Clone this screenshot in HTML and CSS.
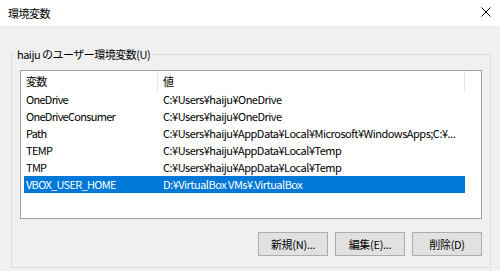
FILE: index.html
```html
<!DOCTYPE html>
<html lang="ja">
<head>
    <meta charset="UTF-8">
    <meta name="viewport" content="width=device-width, initial-scale=1.0">
    <title>環境変数</title>
    <link rel="stylesheet" href="styles.css">
</head>
<body>
    <div class="titlebar">
        <span class="title">環境変数</span>
        <span class="close">
            <svg width="10" height="10" viewBox="0 0 10 10">
                <path d="M0.5 0.5 L9.5 9.5 M9.5 0.5 L0.5 9.5" stroke="#000" stroke-width="1" fill="none"/>
            </svg>
        </span>
    </div>

    <fieldset class="group">
        <legend>haiju のユーザー環境変数(U)</legend>

        <div class="list">
            <div class="list-header">
                <div class="col-name">変数</div>
                <div class="col-value">値</div>
            </div>
            <div class="row">
                <div class="col-name">OneDrive</div>
                <div class="col-value">C:¥Users¥haiju¥OneDrive</div>
            </div>
            <div class="row">
                <div class="col-name">OneDriveConsumer</div>
                <div class="col-value">C:¥Users¥haiju¥OneDrive</div>
            </div>
            <div class="row">
                <div class="col-name">Path</div>
                <div class="col-value">C:¥Users¥haiju¥AppData¥Local¥Microsoft¥WindowsApps;C:¥...</div>
            </div>
            <div class="row">
                <div class="col-name">TEMP</div>
                <div class="col-value">C:¥Users¥haiju¥AppData¥Local¥Temp</div>
            </div>
            <div class="row">
                <div class="col-name">TMP</div>
                <div class="col-value">C:¥Users¥haiju¥AppData¥Local¥Temp</div>
            </div>
            <div class="row selected">
                <div class="col-name">VBOX_USER_HOME</div>
                <div class="col-value">D:¥VirtualBox VMs¥.VirtualBox</div>
            </div>
        </div>

        <div class="buttons">
            <button>新規(N)...</button>
            <button>編集(E)...</button>
            <button>削除(D)</button>
        </div>
    </fieldset>
</body>
</html>
```

FILE: styles.css
```css
body {
    margin: 0;
    width: 500px;
    height: 271px;
    overflow: hidden;
    background-color: #f0f0f0;
    font-family: "Noto Sans CJK JP", "Noto Sans", sans-serif;
    font-size: 11px;
    letter-spacing: -0.5px;
    color: #000;
}
.titlebar {
    height: 26px;
    background: white;
    display: flex;
    align-items: center;
    justify-content: space-between;
    padding: 0 9px 0 8px;
}
.title {
    line-height: 16px;
}
.close {
    display: flex;
    margin-top: -2px;
}
.group {
    margin: 20px 9px 0 11px;
    padding: 8px 8px 11px 8px;
    border: 1px solid #dcdcdc;
    min-inline-size: 0;
}
.group legend {
    padding: 0 2px;
    margin-left: -5px;
    line-height: 16px;
    letter-spacing: -0.5px;
}
.list {
    height: 147px;
    background: white;
    border: 1px solid #a0a0a0;
    padding-left: 3px;
}
.list-header, .row {
    display: flex;
    white-space: nowrap;
}
.list-header {
    height: 20px;
    line-height: 20px;
}
.row {
    width: 441px;
    height: 17px;
    line-height: 17px;
}
.col-name {
    width: 131px;
    padding-left: 2px;
    letter-spacing: -0.7px;
}
.col-value {
    width: 302px;
    padding-left: 6px;
    overflow: hidden;
    text-overflow: ellipsis;
}
.list-header .col-value {
    width: 301px;
    padding-left: 5px;
    border-left: 1px solid #e5e5e5;
    border-right: 1px solid #e5e5e5;
}
.row.selected {
    background-color: #0078d7;
    color: white;
}
.buttons {
    display: flex;
    justify-content: flex-end;
    gap: 7px;
    margin-top: 13px;
}
button {
    width: 70px;
    height: 24px;
    padding: 0;
    background-color: #e1e1e1;
    border: 1px solid #adadad;
    font-family: inherit;
    font-size: 11px;
    letter-spacing: -0.3px;
    color: #000;
}
```
